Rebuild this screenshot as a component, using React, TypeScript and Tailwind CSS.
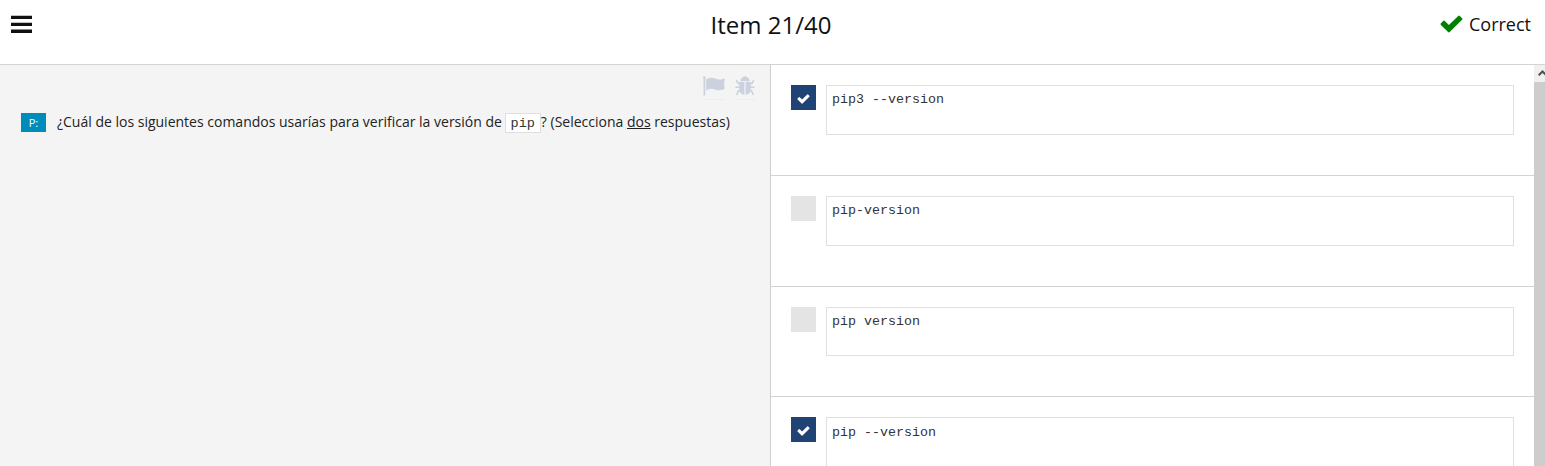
import React from "react";

type Answer = { code: string; checked: boolean; rowClass: string; boxClass: string };

const answers: Answer[] = [
  { code: "pip3 --version", checked: true, rowClass: "h-[111px]", boxClass: "h-[50px] pt-[4px]" },
  { code: "pip-version", checked: false, rowClass: "h-[111px]", boxClass: "h-[50px] pt-[4px]" },
  { code: "pip version", checked: false, rowClass: "h-[110px]", boxClass: "h-[49px] pt-[4px]" },
  { code: "pip --version", checked: true, rowClass: "h-[111px]", boxClass: "h-[50px] pt-[5px]" },
];

function CheckIcon({ className }: { className: string }) {
  return (
    <svg viewBox="0 0 23 18" fill="currentColor" className={className} aria-hidden="true">
      <path d="M.9 8.3 3.2 6Q4 5.2 4.8 6L8.9 10.1 18.2.9Q19 .1 19.8.9L22.1 3.2Q22.9 4 22.1 4.8L9.7 17.1Q8.9 17.9 8.1 17.1L.9 9.9Q.1 9.1.9 8.3Z" />
    </svg>
  );
}

function FlagIcon() {
  return (
    <svg viewBox="0 0 22 20" fill="currentColor" className="h-5 w-[22px]" aria-hidden="true">
      <path d="M1.4.2a1.4 1.4 0 0 1 .9 2.4V19.5H.5V2.6A1.4 1.4 0 0 1 1.4.2Z" />
      <path d="M3.2 3.2C6.5 1.5 9.3 1.2 12.1 2.6c3 1.5 5.5 1.2 8.6-.2q.9-.3.9.6c0 1.3-.5 2.4-.5 4.6s.5 3.4.5 4.6c0 .6-.2.8-.6 1-2.8 1.5-6.1 1.5-9.1.2-3-1.3-5.5-.8-8.7 1Z" />
    </svg>
  );
}

function BugIcon() {
  return (
    <svg viewBox="0 0 20 20" className="h-5 w-5" aria-hidden="true">
      <path fill="currentColor" d="M5.5 4.9C5.5 3.2 6.3 2 7.7 1.5 8.3.7 9 .3 10 .3s1.7.4 2.3 1.2c1.4.5 2.2 1.7 2.2 3.4ZM4.3 5.7h5.1v13.1c-3.2-.2-5.1-2.6-5.1-6.3ZM10.6 5.7h5.1v6.8c0 3.7-1.9 6.1-5.1 6.3Z" />
      <path fill="none" stroke="currentColor" strokeWidth="1.6" strokeLinejoin="round" strokeLinecap="round" d="M5 7.7H3.2L1.6 4.7M15 7.7h1.8l1.6-3M5 11.2H.9M15 11.2h4.1M5.3 14.6H3.6L2 18.2M14.7 14.6h1.7l1.6 3.6" />
    </svg>
  );
}

export default function App() {
  return (
    <div className="flex h-[466px] w-[1545px] flex-col overflow-hidden bg-white font-['Open_Sans',sans-serif] text-[#111]">
      <header className="grid h-[65px] shrink-0 grid-cols-3 items-start border-b border-[#d3d3d0]">
        <button aria-label="Menu" className="mt-[15px] ml-[11px] w-[21px] text-[#111]">
          <svg viewBox="0 0 21 19" fill="currentColor" className="block h-[19px] w-[21px]" aria-hidden="true">
            <path d="M0 .8h21V4H0ZM0 7.8h21V11.1H0ZM0 14.6h21V18H0Z" />
          </svg>
        </button>
        <h1 className="mt-[7px] pr-[3px] text-center text-[24px] leading-[36px]">Item 21/40</h1>
        <div className="mt-[10px] flex items-start justify-end pr-[14px] text-[18px] leading-[28px]">
          <CheckIcon className="mt-[5px] mr-[6px] h-[18px] w-[23px] text-[#008000]" />
          <span>Correct</span>
        </div>
      </header>

      <main className="flex min-h-0 flex-1">
        <section className="w-[771px] shrink-0 border-r border-[#cfcfcf] bg-[#f4f4f4]">
          <div className="flex h-[41px] justify-end gap-[10px] pt-[11px] pr-[15px] text-[#cbd2dd]">
            <span className="h-[24px] border-b border-dotted border-[#e8e8e8]"><FlagIcon /></span>
            <span className="h-[24px] border-b border-dotted border-[#e8e8e8]"><BugIcon /></span>
          </div>
          <div className="flex items-start pl-[21px]">
            <span className="mt-[7px] mr-[11px] flex h-[19px] w-[25px] items-center justify-center bg-[#008cba] pt-px text-[11px] text-white">P:</span>
            <p className="mt-[5px] text-[14px] leading-[22px] whitespace-nowrap text-[#222]">
              ¿Cuál de los siguientes comandos usarías para verificar la versión de{" "}
              <code className="-ml-px border border-[#dfdfdf] bg-white px-[5px] pt-[2px] pb-[1px] font-['Liberation_Mono',monospace] text-[13.5px] text-[#333]">pip</code>
              ? (Selecciona <u>dos</u> respuestas)
            </p>
          </div>
        </section>

        <section className="min-w-0 flex-1 overflow-hidden">
          {answers.map((answer) => (
            <div key={answer.code} className={`flex items-start gap-[10px] border-b border-[#d3d3d0] px-5 pt-5 ${answer.rowClass}`}>
              <span className={`flex h-[25px] w-[25px] shrink-0 items-center justify-center ${answer.checked ? "bg-[#204375]" : "bg-[#e4e4e4]"}`}>
                {answer.checked && <CheckIcon className="mt-[2px] h-[10px] w-[13px] text-white" />}
              </span>
              <pre className={`flex-1 border border-[#dfdfdf] px-[5px] font-['Liberation_Mono',monospace] text-[13.33px] leading-[20px] text-[#333] ${answer.boxClass}`}>{answer.code}</pre>
            </div>
          ))}
        </section>

        <div className="flex w-[11px] shrink-0 flex-col overflow-hidden bg-[#cdcdcd]">
          <div className="h-[17px] bg-[#f0f0f0]">
            <svg viewBox="0 0 11 17" className="h-[17px] w-[11px]" aria-hidden="true">
              <path d="m4.7 10.3 3.8-3.8 3.8 3.8" fill="none" stroke="#505050" strokeWidth="2" />
            </svg>
          </div>
        </div>
      </main>
    </div>
  );
}
